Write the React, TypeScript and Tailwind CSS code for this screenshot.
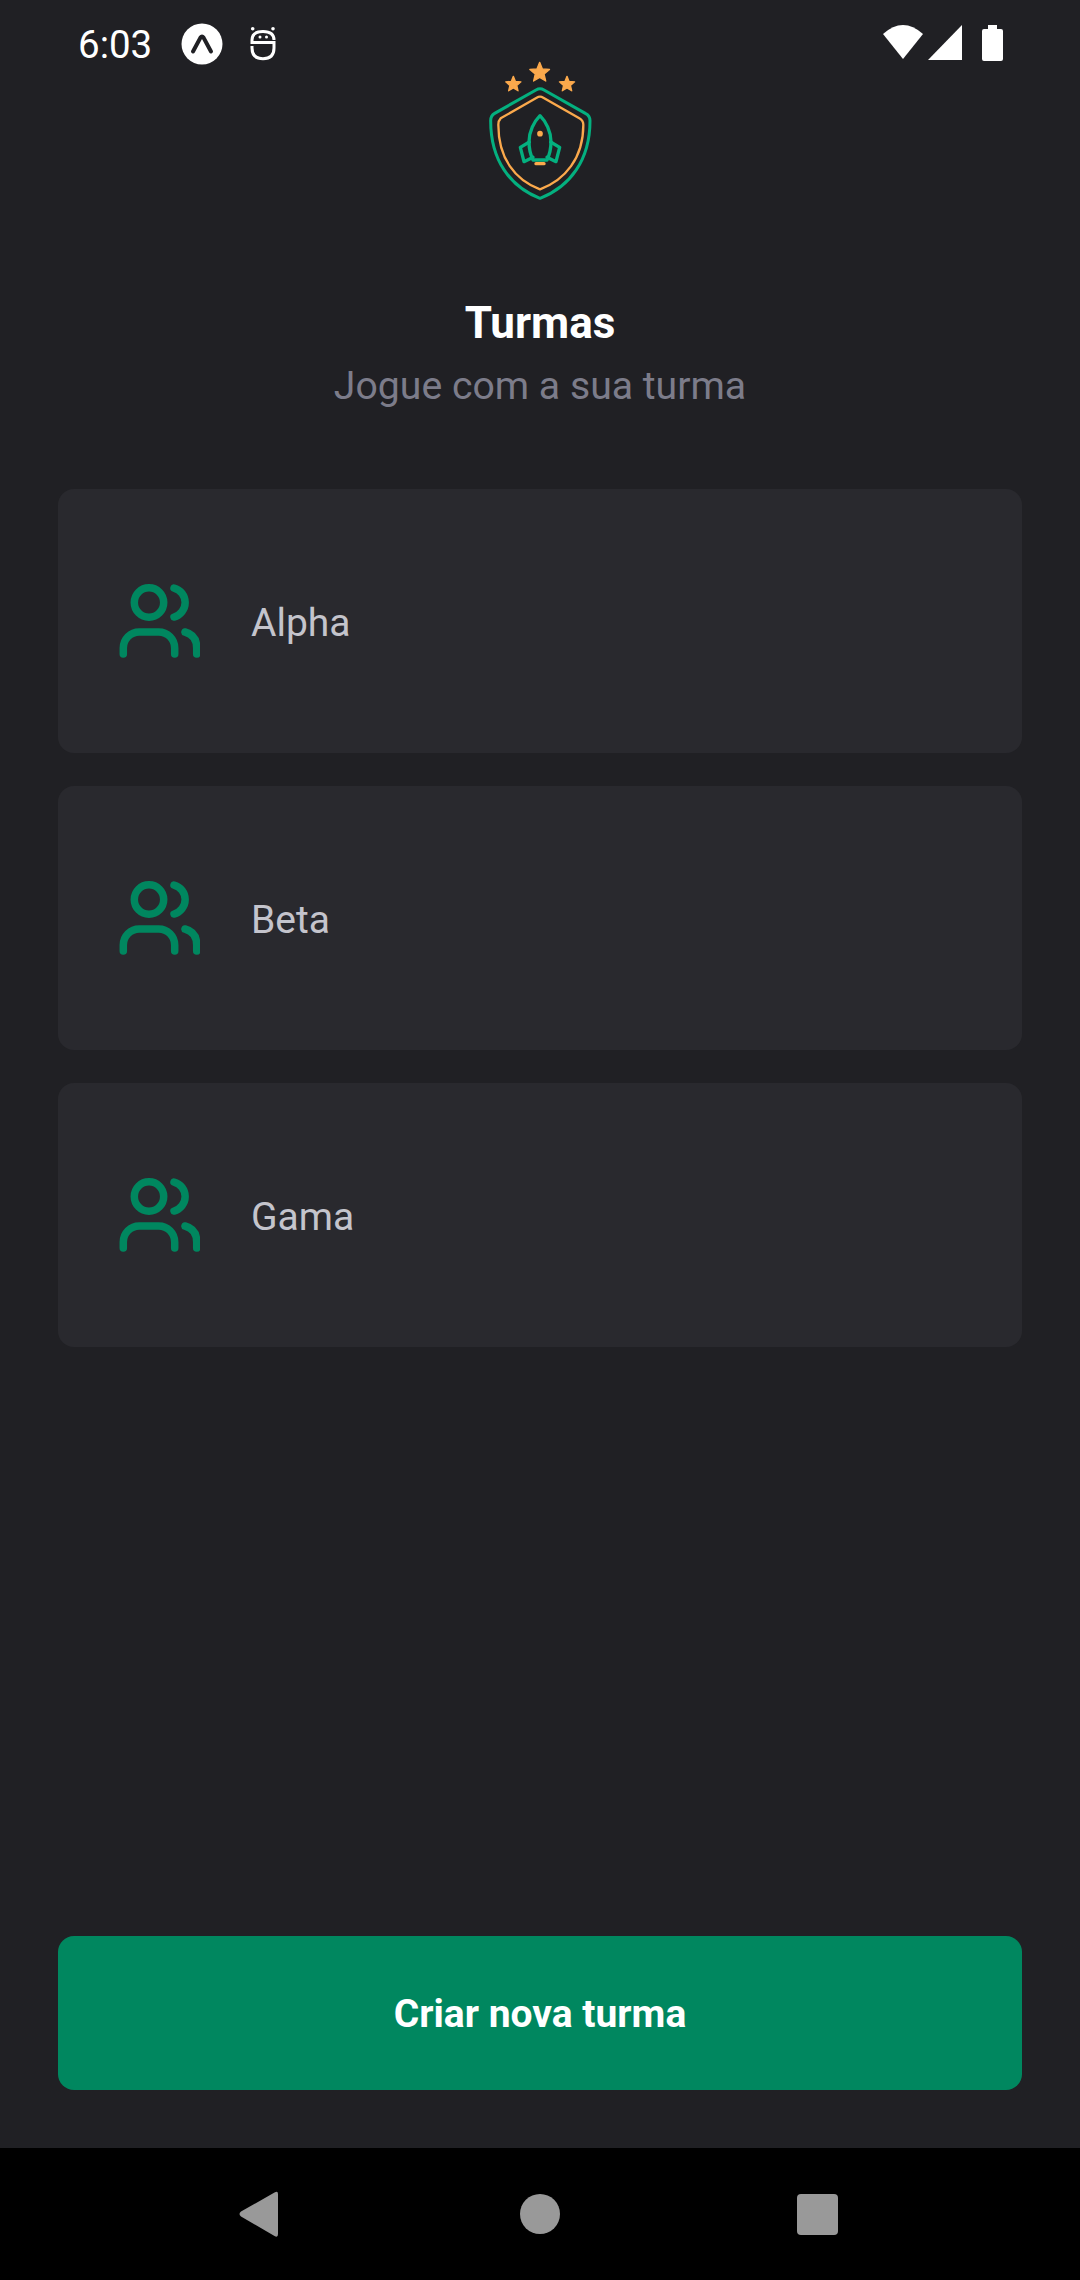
const FONT = "font-['Roboto',sans-serif]";

function GroupIcon() {
  return (
    <svg width="90" height="80" viewBox="110 581 90 80" fill="none" stroke="#00875F" strokeWidth="7.5" strokeLinecap="round" className="shrink-0">
      <circle cx="149" cy="602.5" r="14.7" />
      <path d="M123.3 654V648A16 16 0 0 1 139.3 632H158.7A16 16 0 0 1 174.7 648V654" />
      <path d="M174 588A15 15 0 0 1 174 617" />
      <path d="M185 632Q196.7 635 196.7 648V654" />
    </svg>
  );
}

function star(cx: number, cy: number, r: number) {
  const pts: string[] = [];
  for (let i = 0; i < 10; i++) {
    const rad = i % 2 === 0 ? r : r * 0.45;
    const a = (-90 + i * 36) * (Math.PI / 180);
    pts.push(`${(cx + rad * Math.cos(a)).toFixed(1)},${(cy + rad * Math.sin(a)).toFixed(1)}`);
  }
  return pts.join(" ");
}

function Logo() {
  return (
    <svg width="140" height="160" viewBox="0 0 420 480" fill="none" strokeLinejoin="round" strokeLinecap="round">
      <g fill="#FBA94C" stroke="#FBA94C" strokeWidth="4">
        <polygon points={star(209, 68, 31)} />
        <polygon points={star(130, 103, 24)} />
        <polygon points={star(291, 103, 24)} />
      </g>
      <path d="M198 120Q210 113 222 120L346 190Q360 197 360 212C360 330 300 410 210 445C120 410 62 330 62 212Q62 197 74 190Z" stroke="#04B07F" strokeWidth="9" />
      <path d="M200 143Q210 137 220 143L328 205Q340 212 340 224C340 325 285 390 210 418C135 390 85 325 85 224Q85 212 92 205Z" stroke="#FBA94C" strokeWidth="7" />
      <path d="M210 197C192 215 177 245 177 275C177 295 182 315 189 330H231C238 315 243 295 243 275C243 245 228 215 210 197Z" stroke="#04B07F" strokeWidth="10" />
      <path d="M178 276L151 292L162 335L189 322" stroke="#04B07F" strokeWidth="10" />
      <path d="M242 276L269 292L258 335L231 322" stroke="#04B07F" strokeWidth="10" />
      <circle cx="210" cy="251" r="8.5" fill="#FBA94C" />
      <path d="M198 341H222" stroke="#FBA94C" strokeWidth="10" />
    </svg>
  );
}

function StatusBar() {
  return (
    <div className="flex h-[50px] items-start justify-between pl-[78px] pr-[77px] pt-[22px] text-white">
      <div className="flex items-center">
        <span className="w-[75px] pt-[2px] text-[38.5px] leading-[42px]">6:03</span>
        <svg width="42" height="42" viewBox="0 0 42 42" className="ml-[28px]">
          <circle cx="21" cy="21" r="20.5" fill="#fff" />
          <path d="M12 28.5L19.5 14.5Q21 12.5 22.5 14.5L30 28.5" fill="none" stroke="#202024" strokeWidth="4" strokeLinecap="round" />
        </svg>
        <svg width="26" height="34" viewBox="0 0 26 34" fill="none" stroke="#fff" strokeWidth="3" className="ml-[27px]">
          <path d="M24 13C24 7 20 4.5 13 4.5S2 7 2 13V15.5H24V21C24 28 20 31.7 13 31.7S2 28 2 21V19" />
          <circle cx="2.7" cy="1.8" r="1.8" fill="#fff" stroke="none" />
          <circle cx="23" cy="1.8" r="1.8" fill="#fff" stroke="none" />
          <circle cx="10" cy="10" r="1.5" fill="#fff" stroke="none" />
          <circle cx="16.5" cy="10" r="1.5" fill="#fff" stroke="none" />
        </svg>
      </div>
      <svg width="120" height="36" viewBox="0 0 120 36" fill="#fff" className="mt-[3px]">
        <path d="M0 9Q20 -9 40 9L20 34Z" />
        <path d="M79 0V35H45Z" />
        <path d="M99 6Q99 4 101 4H105V0H114V4H118Q120 4 120 6V34Q120 36 118 36H101Q99 36 99 34Z" />
      </svg>
    </div>
  );
}

function Card({ name }: { name: string }) {
  return (
    <div className="flex h-[264px] items-center rounded-[16px] bg-[#29292E] pl-[52px]">
      <GroupIcon />
      <span className="ml-[51px] pt-[5px] text-[39px] text-[#C4C4CC]">{name}</span>
    </div>
  );
}

export default function App() {
  return (
    <div className={`${FONT} flex h-[2280px] w-[1080px] flex-col bg-[#202024]`}>
      <StatusBar />
      <div className="flex flex-1 flex-col px-[58px]">
        <div className="flex justify-center">
          <Logo />
        </div>
        <h1 className="mt-[86px] text-center text-[44px] font-bold leading-[54px] text-white">Turmas</h1>
        <p className="mt-[9px] text-center text-[39.2px] leading-[54px] text-[#7C7C8A]">Jogue com a sua turma</p>
        <div className="mt-[76px] flex flex-col gap-[33px]">
          <Card name="Alpha" />
          <Card name="Beta" />
          <Card name="Gama" />
        </div>
        <button className="mt-auto mb-[58px] h-[154px] rounded-[16px] bg-[#00875F] pt-[2px] text-[39px] font-bold text-white">
          Criar nova turma
        </button>
      </div>
      <div className="flex h-[132px] items-center justify-center bg-black">
        <svg width="600" height="50" viewBox="0 0 600 50" fill="#999" className="ml-[-2px]">
          <path d="M35.5 3.5Q39 1.5 39 5V45Q39 49 35.5 47L2 27.5Q-1 25 2 22.5Z" />
          <circle cx="301" cy="25" r="20" />
          <rect x="558" y="5" width="41" height="41" rx="4" />
        </svg>
      </div>
    </div>
  );
}
